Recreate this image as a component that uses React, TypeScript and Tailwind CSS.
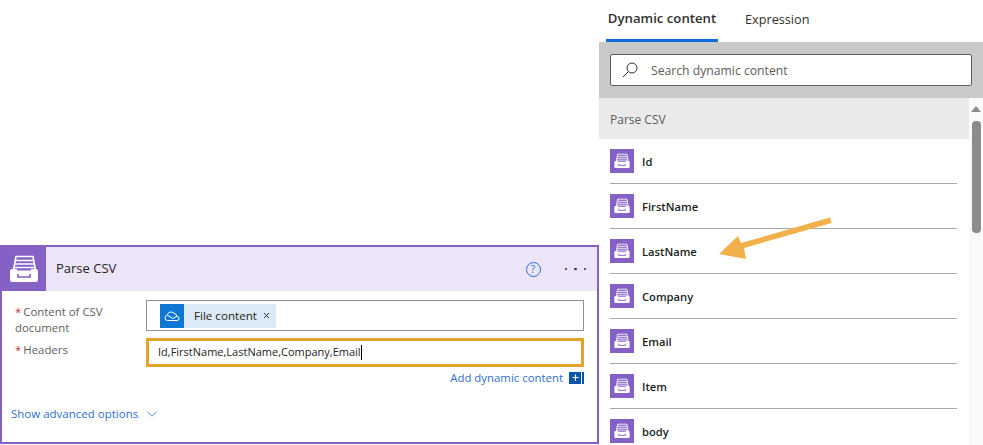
import { ChevronDown, Plus, X } from 'lucide-react';

const outputs = ['Id', 'FirstName', 'LastName', 'Company', 'Email', 'Item', 'body'];

// Drawer glyph of the CSV connector, same drawing at both sizes
function DrawerIcon({ size }: { size: number }) {
  return (
    <div className="flex shrink-0 items-center justify-center bg-[#8661c5]" style={{ width: size, height: size }}>
      <svg width={size} height={size} viewBox="0 0 44 44" fill="none">
        <path d="M11.5 23 L14 9.5 H31 L33.5 23" stroke="white" strokeWidth="1.6" fill="#8661c5" />
        <path d="M13.5 13.5 H31.5 M12.8 17 H32.2 M12 20.5 H33" stroke="white" strokeWidth="1.5" />
        <path d="M8 24 Q8 22 10 22 H15 V23.5 H29 V22 H34 Q36 22 36 24 V33 Q36 35 34 35 H10 Q8 35 8 33 Z" fill="white" />
        <path d="M16 27 V30 H28 V27" stroke="#8661c5" strokeWidth="1.7" />
      </svg>
    </div>
  );
}

function CloudIcon() {
  return (
    <svg width="16" height="12" viewBox="0 0 16 12" fill="none" stroke="white" strokeWidth="1">
      <path d="M3.5 10.5 H13 Q15 10.5 15 8.5 Q15 6.5 12.8 6.3 Q12.3 3.4 9.5 3 Q7.3 1 5 2.5 Q3.4 3.4 3.4 5.2 Q1 5.5 1 8 Q1 10.5 3.5 10.5 Z" />
      <path d="M3.4 5.2 L9 8.5 L12.8 6.3" />
    </svg>
  );
}

function FieldLabel({ children }: { children: React.ReactNode }) {
  return (
    <div className="w-[144px] shrink-0 pl-[13px] pr-[14px] pt-[4px] text-[11.4px] leading-[15.5px] text-[#605e5c]">
      <span className="mr-[2px] text-[#c4314b]">*</span>
      {children}
    </div>
  );
}

export default function App() {
  return (
    <div className="relative flex h-[445px] w-[983px] overflow-hidden bg-white font-['Open_Sans',sans-serif]">
      {/* Action card */}
      <div className="flex w-[599px] shrink-0 flex-col justify-end">
        <div className="mb-px flex h-[199px] flex-col border-2 border-[#8661c5]">
          <div className="flex h-[44px] shrink-0 items-center bg-[#ebe5f7]">
            <DrawerIcon size={44} />
            <span className="ml-[10px] text-[13px] text-[#252423]">Parse CSV</span>
            <div className="ml-auto mr-[11px] flex items-center">
              <div className="flex h-[15px] w-[15px] items-center justify-center rounded-full border border-[#2f6fd0] text-[10px] leading-none text-[#2f6fd0]">
                ?
              </div>
              <div className="ml-[24px] flex gap-[7px]">
                <span className="h-[2.5px] w-[2.5px] rounded-full bg-[#323130]" />
                <span className="h-[2.5px] w-[2.5px] rounded-full bg-[#323130]" />
                <span className="h-[2.5px] w-[2.5px] rounded-full bg-[#323130]" />
              </div>
            </div>
          </div>

          <div className="flex flex-col pr-[13px] pt-[9px]">
            <div className="flex h-[31px]">
              <FieldLabel>Content of CSV document</FieldLabel>
              <div className="flex h-[31px] flex-1 items-center border border-[#919191] pl-[13px]">
                <div className="flex h-[24px] items-center bg-[#dceaf7] pr-[5px]">
                  <div className="flex h-[24px] w-[24px] items-center justify-center bg-[#0f78d4]">
                    <CloudIcon />
                  </div>
                  <span className="ml-[10px] text-[11.6px] text-[#252423]">File content</span>
                  <X className="ml-[5px] h-[9px] w-[9px] text-[#252423]" strokeWidth={2.5} />
                </div>
              </div>
            </div>

            <div className="mt-[7px] flex h-[29px]">
              <FieldLabel>Headers</FieldLabel>
              <div className="flex h-[29px] flex-1 items-center border-[3px] border-[#e5a22f] pb-px pl-[9px] text-[11px] text-[#252423]">
                <span>Id,FirstName,LastName,Company,Email</span>
                <span className="h-[15px] w-px bg-black" />
              </div>
            </div>

            <div className="mt-[2px] flex items-center justify-end text-[11.4px] text-[#2f6fd0]">
              <span>Add dynamic content</span>
              <div className="ml-[6px] flex h-[12px] w-[12px] items-center justify-center bg-[#0a55a8]">
                <Plus className="h-[9px] w-[9px] text-white" strokeWidth={3} />
              </div>
              <div className="ml-px h-[12px] w-[2px] bg-[#0a55a8]" />
            </div>
          </div>

          <div className="mt-[19px] flex items-center pl-[9px] text-[11.5px] text-[#2f6fd0]">
            <span>Show advanced options</span>
            <ChevronDown className="ml-[5px] h-[18px] w-[18px]" strokeWidth={1} />
          </div>
        </div>
      </div>

      {/* Dynamic content panel */}
      <div className="flex min-w-0 flex-1 flex-col">
        <div className="flex h-[42px] shrink-0 pl-[7px]">
          <div className="flex h-[42px] w-[112px] items-center justify-center border-b-[3px] border-[#0f6cdb] pb-[1px] text-[13.2px] font-semibold text-[#323130]">
            Dynamic content
          </div>
          <div className="ml-[27px] flex h-[40px] items-center text-[12.7px] text-[#323130]">Expression</div>
        </div>

        <div className="flex h-[56px] shrink-0 items-center bg-[#c8cac8] px-[11px]">
          <div className="flex h-[32px] flex-1 items-center rounded-[2px] border border-[#605e5c] bg-white pl-[11px] pt-[2px] text-[12.2px] text-[#605e5c]">
            <svg className="-mt-[3px]" width="16" height="16" viewBox="0 0 16 16" fill="none" stroke="#323130" strokeWidth="1">
              <circle cx="10" cy="6" r="5" />
              <path d="M6.5 9.5 L1 15" />
            </svg>
            <span className="ml-[13px]">Search dynamic content</span>
          </div>
        </div>

        <div className="flex min-h-0 flex-1">
          <div className="w-[370px] shrink-0">
            <div className="flex h-[41px] items-center bg-[#e9eaea] pl-[11px] pt-[2px] text-[12px] text-[#605e5c]">Parse CSV</div>
            {outputs.map((name) => (
              <div key={name} className="ml-[11px] mr-[12px] flex h-[45px] items-center border-b border-[#aaaaaa]">
                <DrawerIcon size={24} />
                <span className="ml-[8px] pt-[2px] text-[11.2px] font-semibold text-[#201f1e]">{name}</span>
              </div>
            ))}
          </div>
          <div className="flex flex-1 flex-col items-center bg-[#fafafa] px-[2px] pt-[8px]">
            <div className="h-0 w-0 border-x-[5px] border-b-[6px] border-x-transparent border-b-[#8c8c8c]" />
            <div className="mt-[9px] h-[112px] w-[9px] rounded-[4px] bg-[#8c8c8c]" />
          </div>
        </div>
      </div>

      {/* Annotation arrow */}
      <svg className="absolute left-[710px] top-[210px]" width="130" height="60" viewBox="710 210 130 60">
        <path d="M830 217.5 L831.5 223 L744 248 L746 259 L719 254 L738 236 L741 243 Z" fill="#f2b04a" />
      </svg>
    </div>
  );
}
